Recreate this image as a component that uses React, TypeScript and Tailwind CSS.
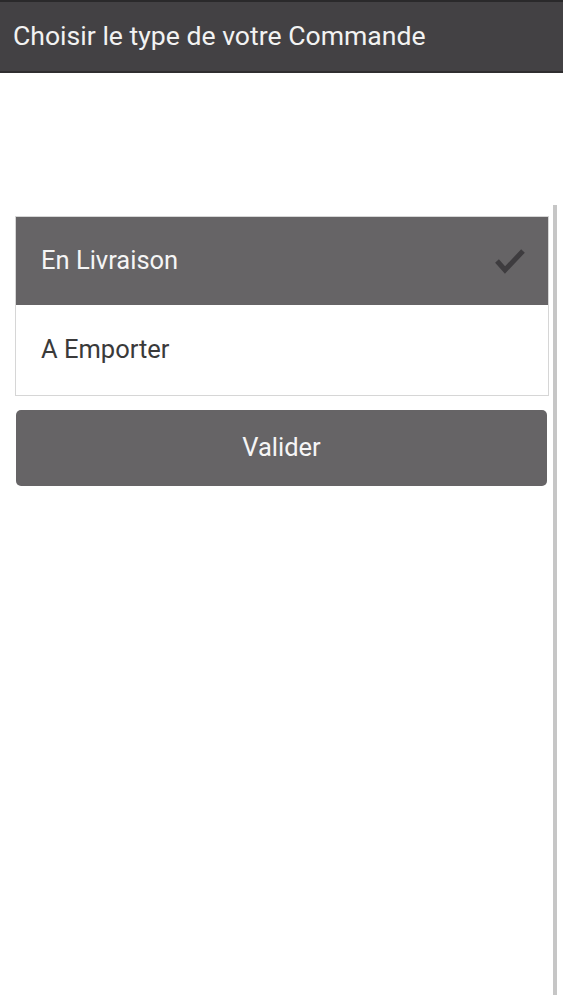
export default function App() {
    return (
        <div className="relative h-[1000px] w-[563px] bg-white font-['Roboto',sans-serif]">
            <div className="h-[73px] border-t-2 border-b-2 border-t-[#2a292b] border-b-[#2f2e30] bg-[#434144] flex items-center pl-[13px]">
                <h1 className="text-[26.6px] leading-none text-[#f2f2f2]">Choisir le type de votre Commande</h1>
            </div>

            <div className="pt-[143px] pl-[15px] pr-[14px]">
                <div className="border border-[#d6d6d6] bg-white">
                    <div className="h-[88px] bg-[#666466] flex items-center justify-between pl-[25px] pr-[20px]">
                        <span className="text-[25.5px] leading-none text-[#f5f5f5]">En Livraison</span>
                        <svg width="34" height="34" viewBox="0 0 34 34" fill="none">
                            <path d="M3 17 L11 26 L29 7" stroke="#3e3c3f" strokeWidth="5" strokeLinejoin="miter" />
                        </svg>
                    </div>
                    <div className="h-[90px] flex items-center pl-[25px]">
                        <span className="text-[25.5px] leading-none text-[#3a3a3a]">A Emporter</span>
                    </div>
                </div>

                <button className="mt-[14px] ml-[1px] w-[531px] h-[76px] rounded-[5px] bg-[#666466] text-[25.5px] leading-none text-[#f5f5f5]">
                    Valider
                </button>
            </div>

            <div className="absolute left-[553px] top-[205px] h-[790px] w-[4px] bg-[#c6c6c6]" />
        </div>
    );
}
